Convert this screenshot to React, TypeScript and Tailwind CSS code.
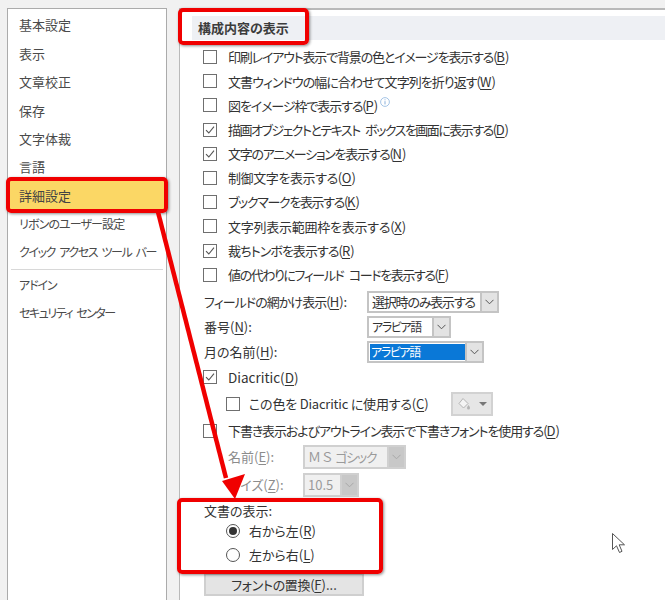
import React from 'react';

const jp = "font-['Meiryo_UI','Noto_Sans_CJK_JP','Noto_Sans',sans-serif] [font-feature-settings:'palt']";

const sideItems = [
  { label: '基本設定', cls: '' },
  { label: '表示', cls: '' },
  { label: '文章校正', cls: '' },
  { label: '保存', cls: '' },
  { label: '文字体裁', cls: '' },
  { label: '言語', cls: '' },
  { label: '詳細設定', cls: 'bg-[#fbd765] text-[#444]' },
  { label: 'リボンのユーザー設定', cls: 'text-[12px] tracking-[-0.9px]' },
  { label: 'クイック アクセス ツール バー', cls: 'text-[12px] tracking-[-1.4px] [word-spacing:3px]' },
];

const checks = [
  { label: '印刷レイアウト表示で背景の色とイメージを表示する(', key: 'B', on: false, cls: 'tracking-[-1.17px]' },
  { label: '文書ウィンドウの幅に合わせて文字列を折り返す(', key: 'W', on: false, cls: 'tracking-[-0.95px]' },
  { label: '図をイメージ枠で表示する(', key: 'P', on: false, info: true, cls: 'tracking-[-1.1px]' },
  { label: '描画オブジェクトとテキスト ボックスを画面に表示する(', key: 'D', on: true, cls: 'tracking-[-1.5px] [word-spacing:4px]' },
  { label: '文字のアニメーションを表示する(', key: 'N', on: true, cls: 'tracking-[-1.3px]' },
  { label: '制御文字を表示する(', key: 'O', on: false, cls: 'tracking-[-0.4px]' },
  { label: 'ブックマークを表示する(', key: 'K', on: false, cls: 'tracking-[-1.35px]' },
  { label: '文字列表示範囲枠を表示する(', key: 'X', on: false, cls: 'tracking-[-0.25px]' },
  { label: '裁ちトンボを表示する(', key: 'R', on: true, cls: 'tracking-[-0.95px]' },
  { label: '値の代わりにフィールド コードを表示する(', key: 'F', on: false, cls: 'tracking-[-1.4px] [word-spacing:4px]' },
];

const Check = ({ on }: { on: boolean }) => (
  <span className="w-[14px] h-[14px] border border-[#6f6f6f] bg-white flex items-center justify-center shrink-0">
    {on && (
      <svg width="10" height="10" viewBox="0 0 10 10" fill="none">
        <path d="M1 5.2 L3.8 8 L9 1.6" stroke="#555" strokeWidth="1.1" />
      </svg>
    )}
  </span>
);

const Label = ({ text, k, end = ')' }: { text: string; k: string; end?: string }) => (
  <span>
    {text}
    <span className="tracking-normal">
      <span className="underline underline-offset-2">{k}</span>
      {end}
    </span>
  </span>
);

const Chevron = ({ color = '#555' }: { color?: string }) => (
  <svg width="9" height="6" viewBox="0 0 9 6" fill="none">
    <path d="M0.5 0.8 L4.5 4.8 L8.5 0.8" stroke={color} strokeWidth="1" />
  </svg>
);

const Select = ({ children, width, h = 22, selected = false, disabled = false, textCls = '' }: { children: React.ReactNode; width: string; h?: number; selected?: boolean; disabled?: boolean; textCls?: string }) => (
  <div className={`flex border-2 ${disabled ? 'border-[#d0d0d0] bg-[#f0f0f0] text-[#9a9a9a]' : 'border-[#c4c4c4] bg-white text-[#333]'} ${width} ${h === 24 ? 'h-[24px]' : 'h-[22px]'}`}>
    <div className="flex-1 min-w-0 flex items-center overflow-hidden pl-[1px]">
      <span className={`${selected ? 'bg-[#0a78d7] text-white flex-1 h-[16px] leading-[16px] pl-[1px]' : 'pl-[2px]'} whitespace-nowrap ${textCls}`}>{children}</span>
    </div>
    <div className={`flex items-center justify-center w-[17px] border-l-2 ${disabled ? 'border-[#d0d0d0] bg-[#c8c8c8]' : 'border-[#c4c4c4] bg-[#e3e3e3]'}`}>
      <Chevron color={disabled ? '#a8a8a8' : '#555'} />
    </div>
  </div>
);

const Radio = ({ on }: { on: boolean }) => (
  <span className="w-[14px] h-[14px] rounded-full border border-[#555] bg-white flex items-center justify-center shrink-0">
    {on && <span className="w-[8px] h-[8px] rounded-full bg-[#333]" />}
  </span>
);

export default function App() {
  return (
    <div className={`relative w-[665px] h-[600px] overflow-hidden flex bg-[#f1f1f1] pt-2 pl-[7px] text-[13px] text-[#333] ${jp}`}>
      {/* left nav */}
      <div className="w-[160px] shrink-0 h-[620px] bg-white border border-[#ababab] pt-[2px] text-[#4a4a4a]">
        {sideItems.map((item) => (
          <div key={item.label} className={`h-[28.4px] pl-[11px] flex items-center whitespace-nowrap ${item.cls}`}>
            {item.label}
          </div>
        ))}
        <div className="mx-[3px] mt-[2px] mb-[1px] border-t border-[#d8d8d8]" />
        <div className="h-[28.4px] pl-[11px] flex items-center text-[12px] tracking-[-1.1px]">アドイン</div>
        <div className="h-[28.4px] pl-[11px] flex items-center text-[12px] tracking-[-1.5px] [word-spacing:3px]">セキュリティ センター</div>
      </div>

      {/* main panel */}
      <div className="ml-[12px] flex-1 h-[620px] bg-white border-l border-t-2 border-[#b9b9b9] pt-[6px]">
        <div className="ml-[12px] h-[24px] bg-[#eef0f4] pl-[6px] pb-[1px] flex items-center font-bold text-[#3c3c3c]">構成内容の表示</div>

        <div className="mt-[5px] pl-[23px]">
          {checks.map((c) => (
            <div key={c.key + c.label} className="h-[24.2px] flex items-center gap-[11px] whitespace-nowrap">
              <Check on={c.on} />
              <span className={`flex items-start ${c.cls}`}>
                <Label text={c.label} k={c.key} />
                {c.info && (
                  <svg className="ml-[2px] mt-[1px]" width="10" height="10" viewBox="0 0 10 10" fill="none">
                    <circle cx="5" cy="5" r="4.4" stroke="#8fb6e0" strokeWidth="0.8" />
                    <path d="M5 4.2 V7.4 M5 2.4 V3.3" stroke="#7aa6d6" strokeWidth="0.9" />
                  </svg>
                )}
              </span>
            </div>
          ))}

          <div className="mt-[4px] flex items-center h-[22px] whitespace-nowrap">
            <span className="w-[164px] pl-[1px] tracking-[-0.95px]"><Label text="フィールドの網かけ表示(" k="H" end="):" /></span>
            <Select width="w-[132px]" textCls="tracking-[-1.2px]">選択時のみ表示する</Select>
          </div>
          <div className="mt-[3px] flex items-center h-[22px]">
            <span className="w-[164px] pl-[1px]"><Label text="番号(" k="N" end="):" /></span>
            <Select width="w-[84px]" textCls="text-[12px] tracking-[-1.4px]">アラビア語</Select>
          </div>
          <div className="mt-[3px] flex items-center h-[22px]">
            <span className="w-[164px] pl-[1px]"><Label text="月の名前(" k="H" end="):" /></span>
            <Select width="w-[117px]" selected textCls="text-[12px] tracking-[-1.4px]">アラビア語</Select>
          </div>

          <div className="mt-[2px] h-[24px] flex items-center gap-[11px]">
            <Check on />
            <span className="text-[13.5px]"><Label text="Diacritic(" k="D" /></span>
          </div>
          <div className="h-[26px] mt-[2px] pl-[23px] flex items-center gap-[9px] whitespace-nowrap">
            <Check on={false} />
            <span className="w-[193px] tracking-[-0.2px]"><Label text="この色を Diacritic に使用する(" k="C" /></span>
            <div className="w-[42px] h-[24px] border-2 border-[#d2d2d2] bg-[#e6e6e6] flex items-center justify-center gap-[8px]">
              <svg width="14" height="14" viewBox="0 0 14 14" fill="none">
                <path d="M6 1.5 L11 6.5 L6.5 11 L2 6.5 Z" fill="#f4f4f4" stroke="#b4b4b4" />
                <path d="M11.5 8 C12.5 9.5 13 10.2 13 11 A1.4 1.4 0 0 1 10 11 C10 10.2 10.6 9.5 11.5 8 Z" fill="#b4b4b4" />
              </svg>
              <span className="w-0 h-0 border-l-[4px] border-r-[4px] border-t-[4px] border-l-transparent border-r-transparent border-t-[#777]" />
            </div>
          </div>
          <div className="mt-[2px] h-[24px] flex items-center gap-[11px] whitespace-nowrap">
            <Check on={false} />
            <span className="tracking-[-1.1px]"><Label text="下書き表示およびアウトライン表示で下書きフォントを使用する(" k="D" /></span>
          </div>
          <div className="mt-[2px] pl-[25px] flex items-center h-[24px] text-[#8c8c8c]">
            <span className="w-[75px]"><Label text="名前(" k="E" end="):" /></span>
            <Select width="w-[103px]" h={24} disabled>
              <span className="tracking-[1.5px]">ＭＳ</span>
              <span className="tracking-[-1.3px]"> ゴシック</span>
            </Select>
          </div>
          <div className="mt-[4px] pl-[25px] flex items-center h-[24px] text-[#8c8c8c]">
            <span className="w-[75px]"><Label text="サイズ(" k="Z" end="):" /></span>
            <Select width="w-[56px]" h={24} disabled>10.5</Select>
          </div>

          <div className="mt-[6px] h-[16px] flex items-center pl-[1px]">文書の表示:</div>
          <div className="h-[24px] pl-[23px] flex items-center gap-[9px]">
            <Radio on />
            <Label text="右から左(" k="R" />
          </div>
          <div className="h-[24px] pl-[23px] flex items-center gap-[9px]">
            <Radio on={false} />
            <Label text="左から右(" k="L" />
          </div>
          <div className="mt-[6px] ml-[1px] w-[160px] h-[23px] bg-[#e4e4e4] border-2 border-[#cfcfcf] flex items-center justify-center tracking-[-0.3px]">
            <Label text="フォントの置換(" k="F" end=")..." />
          </div>
        </div>
      </div>

      {/* red callouts */}
      <div className="absolute left-[178px] top-[8px] w-[131px] h-[37px] border-[4px] border-[#f00000] rounded-[5px] shadow-[1px_1px_3px_rgba(0,0,0,0.45)]" />
      <div className="absolute left-[6px] top-[177px] w-[162px] h-[36px] border-[4px] border-[#f00000] rounded-[5px] shadow-[1px_1px_3px_rgba(0,0,0,0.45)]" />
      <div className="absolute left-[177px] top-[498px] w-[206px] h-[76px] border-[4px] border-[#f00000] rounded-[5px] shadow-[1px_1px_3px_rgba(0,0,0,0.45)]" />
      <svg className="absolute left-0 top-0" width="665" height="600" viewBox="0 0 665 600" fill="none">
        <path d="M158 212 L226 478" stroke="#f00000" strokeWidth="4.5" />
        <path d="M222 481 L245 474 L235 499 Z" fill="#f00000" />
      </svg>

      {/* mouse pointer */}
      <svg className="absolute left-[611px] top-[532px]" width="16" height="23" viewBox="0 0 16 23" fill="none">
        <path d="M1.5 1.5 V17.5 L5.5 13.8 L8.5 20.5 L11 19.3 L8.2 12.8 L13.5 12.8 Z" fill="#fff" stroke="#555" strokeWidth="1" />
      </svg>
    </div>
  );
}
